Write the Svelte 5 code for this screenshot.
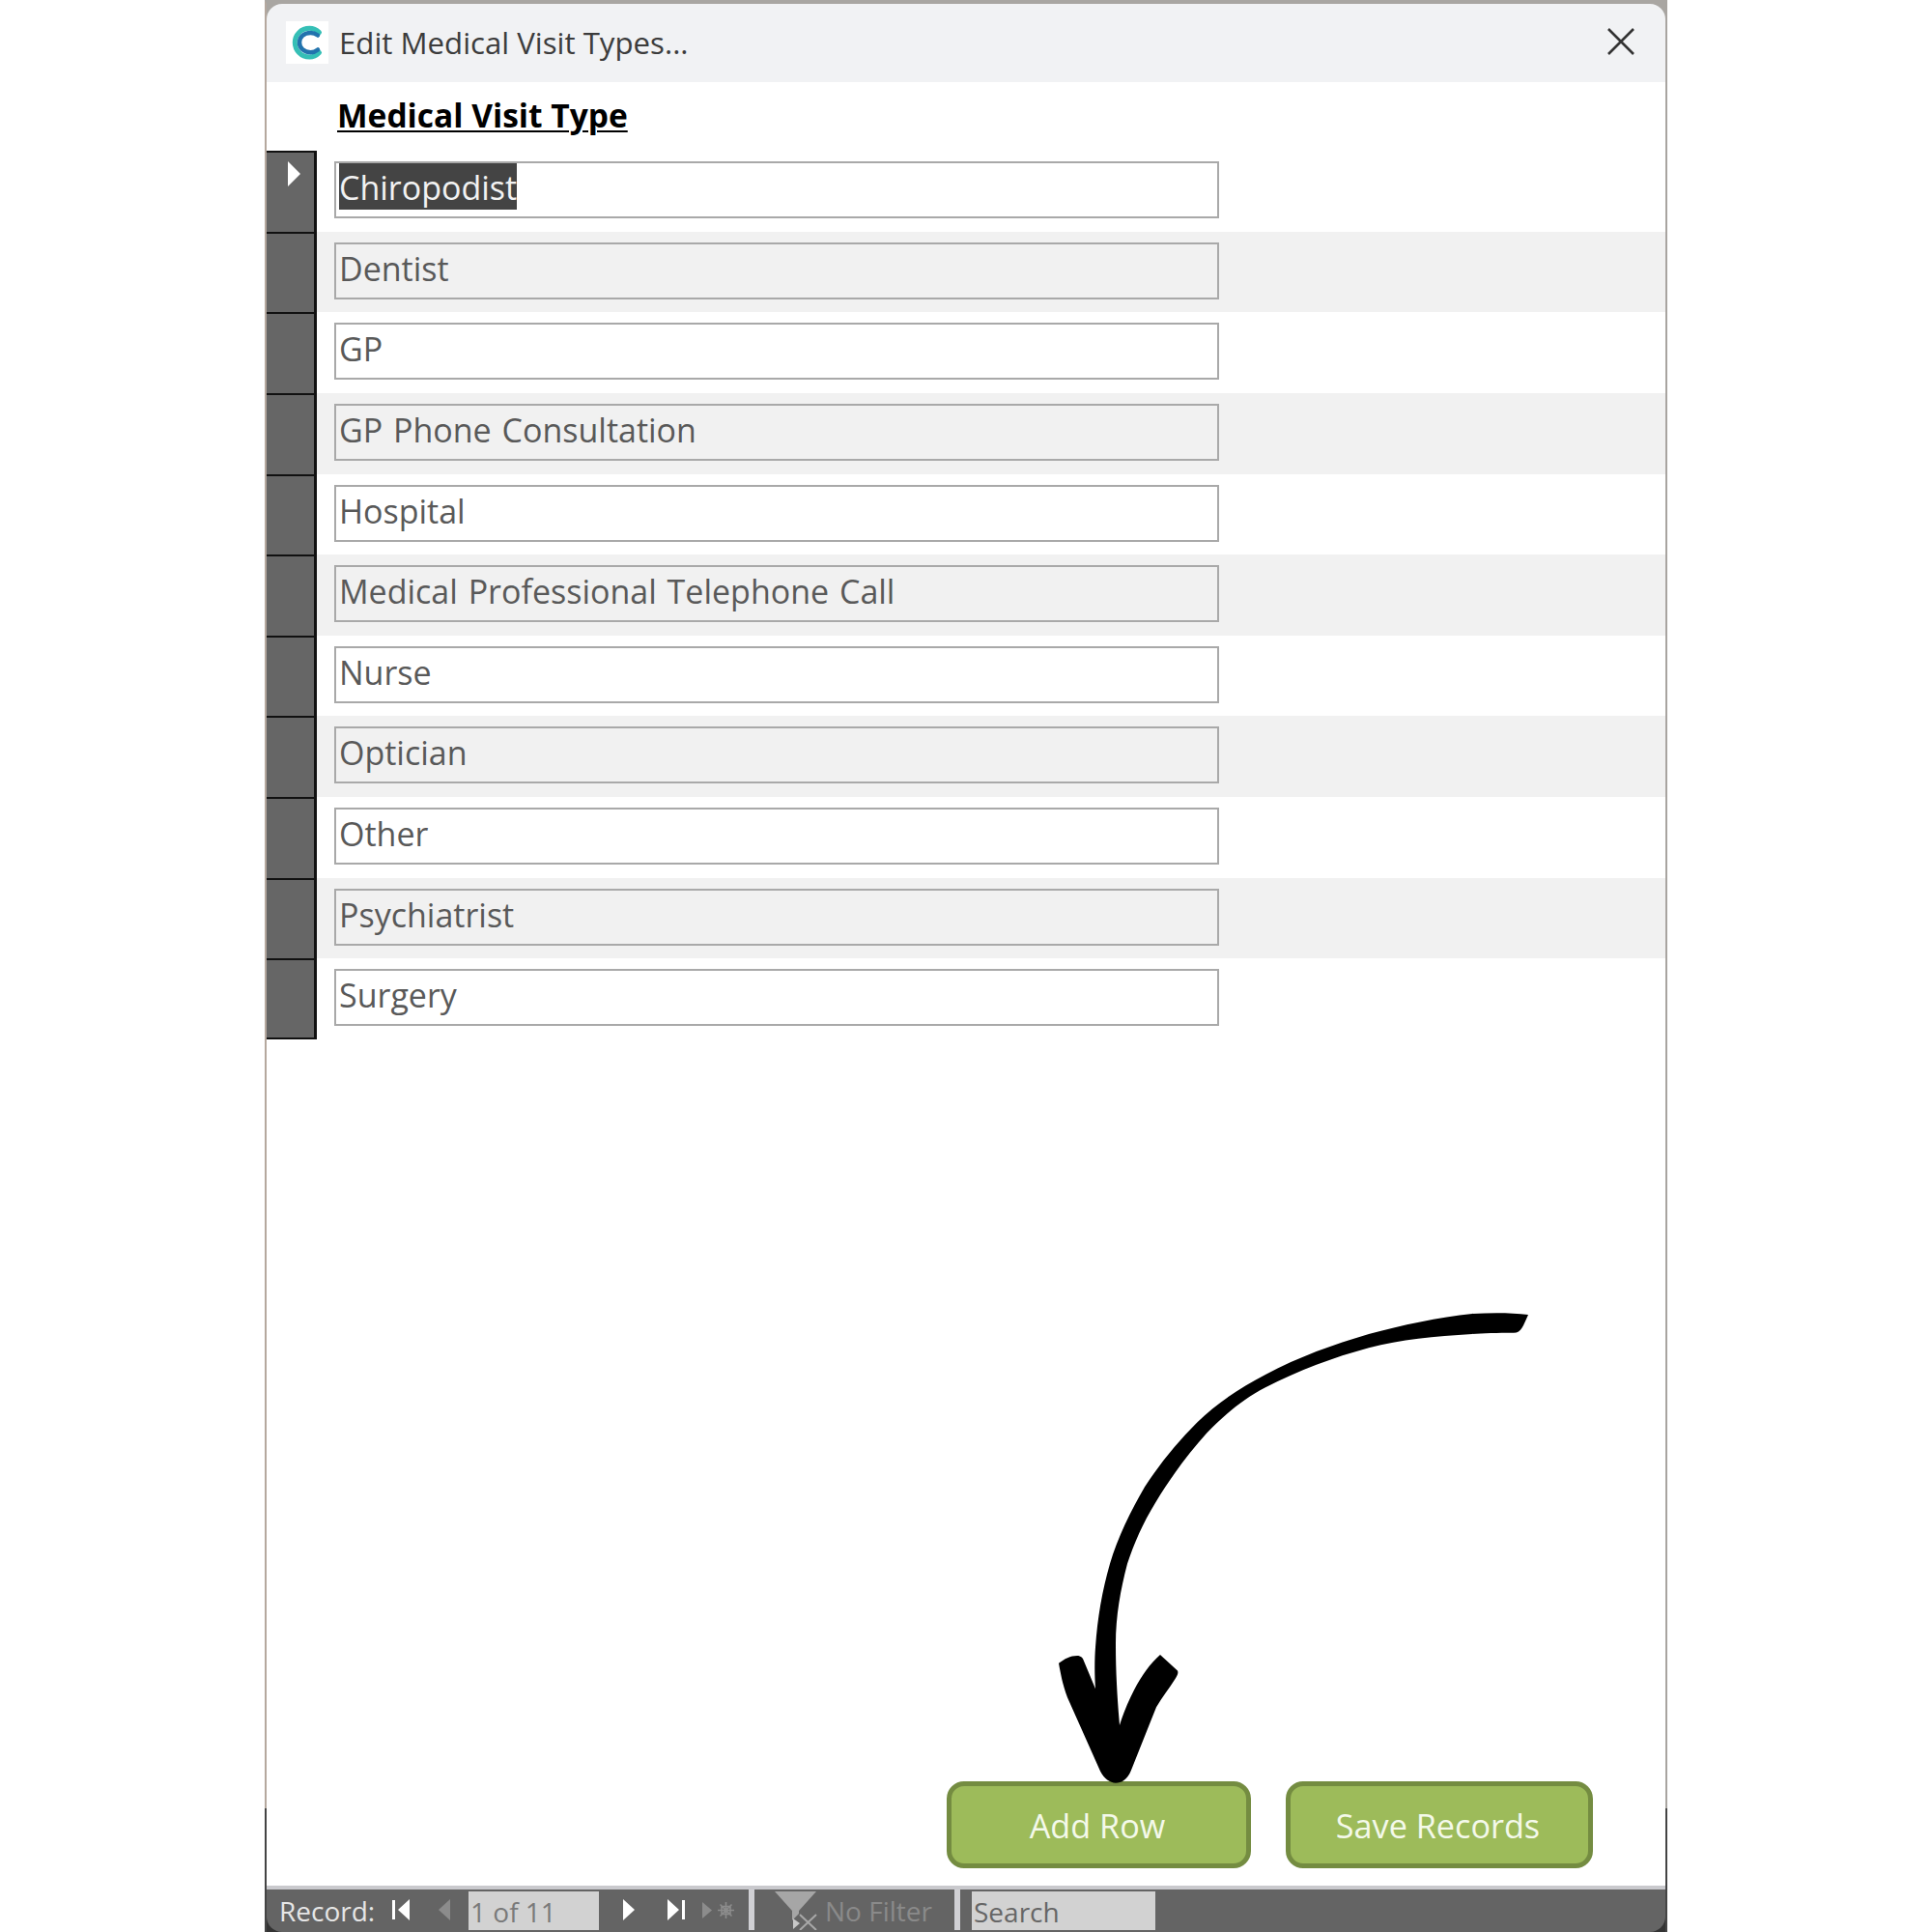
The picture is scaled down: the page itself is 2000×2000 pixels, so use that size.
<script>
  const types = ['Chiropodist','Dentist','GP','GP Phone Consultation','Hospital','Medical Professional Telephone Call','Nurse','Optician','Other','Psychiatrist','Surgery'];
</script>

<div class="page">
  <div class="window">
    <header class="titlebar">
      <div class="logo">
        <svg viewBox="0 0 44 44" width="44" height="44" aria-hidden="true">
          <path d="M34.500 11.500 C31 8.200 28 7.300 24.500 7.300 C15.500 7.300 9.300 14 9.300 22 C9.300 30 15.500 37 24.500 37 C28 37 31 36 34.500 32.500" class="arc-outer" />
          <path d="M33 14.500 C30.500 12.700 28 12 25.500 12 C18.500 12 14 16.500 14 22 C14 27.500 18.500 32.300 25.500 32.300 C28 32.300 30.500 31.500 33 29.500" class="arc-inner" />
        </svg>
      </div>
      <span class="title">Edit Medical Visit Types...</span>
      <svg class="close" viewBox="0 0 30 30" width="30" height="30" aria-hidden="true">
        <path d="M2 2 L28 28 M28 2 L2 28" />
      </svg>
    </header>

    <div class="column-head"><span>Medical Visit Type</span></div>

    <div class="rows">
      {#each types as t, i}
        <div class="row" class:alt={i % 2 === 1}>
          <div class="selector">
            {#if i === 0}<span class="current"></span>{/if}
          </div>
          <div class="field">
            <span class:selected={i === 0}>{t}</span>
          </div>
        </div>
      {/each}
    </div>

    <div class="actions">
      <button class="btn add">Add Row</button>
      <button class="btn save">Save Records</button>
    </div>

    <footer class="status">
      <span class="label">Record:</span>
      <svg class="nav first" viewBox="0 0 20 22" width="20" height="22" aria-hidden="true"><path d="M1 1h3v20H1z M19 0v22L7 11z" /></svg>
      <svg class="nav prev" viewBox="0 0 12 22" width="12" height="22" aria-hidden="true"><path d="M12 0v22L0 11z" /></svg>
      <div class="box counter">1 of 11</div>
      <svg class="nav next" viewBox="0 0 12 22" width="12" height="22" aria-hidden="true"><path d="M0 0v22L12 11z" /></svg>
      <svg class="nav last" viewBox="0 0 18 22" width="18" height="22" aria-hidden="true"><path d="M0 0v22L12 11z M15 1h3v20h-3z" /></svg>
      <svg class="nav new" viewBox="0 0 33 22" width="33" height="22" aria-hidden="true">
        <path d="M0 3v17L10 11.500z" />
        <path class="star" d="M24.500 3v17 M16 11.500h17 M18.500 5.500l12 12 M30.500 5.500l-12 12 M20 7.500h9v8h-9z" />
      </svg>
      <div class="sep first-sep"></div>
      <svg class="funnel" viewBox="0 0 44 40" width="44" height="40" aria-hidden="true">
        <path d="M0 0h43L25 20v3l-7 7V20z" />
        <path class="tri" d="M19 28l7 5-7 6z" />
        <path class="x" d="M26 24l17 16 M43 24L26 40" />
      </svg>
      <span class="nofilter">No Filter</span>
      <div class="sep second-sep"></div>
      <div class="box search">Search</div>
    </footer>
  </div>

  <svg class="arrow" viewBox="1090 1350 500 500" width="500" height="500" aria-hidden="true">
    <path transform="translate(0 1330) scale(1 1.1067) translate(0 -1330)" d="M1582 1358 C1577 1368 1575 1375 1567 1375 C1550 1375 1535 1375.500 1524 1376 C1485 1378 1450 1381 1417 1389 C1380 1398 1345 1410 1310 1426 C1285 1438 1267 1452 1249 1469 C1230 1488 1212 1510 1196 1534 C1183 1553 1174 1572 1167 1591 C1160 1615 1155 1640 1155 1666 C1155 1695 1157 1720 1159 1742 C1163 1730 1168 1720 1174 1709 C1182 1695 1191 1684 1201 1676 L1219 1691 C1220 1693 1219 1695 1217 1698 C1210 1708 1203 1716 1197 1725 L1171 1784 C1167 1793 1161 1796 1155 1796 C1149 1796 1143 1792 1139 1785 L1105 1716 C1100 1704 1098 1694 1096 1684 C1102 1680 1108 1677 1115 1677 C1119 1677 1121 1679 1122 1682 L1134 1708 C1133 1695 1133 1680 1134 1669 C1136 1642 1141 1616 1149 1591 C1157 1566 1171 1541 1185 1519 C1201 1497 1219 1477 1239 1459 C1260 1440 1285 1426 1310 1414 C1345 1397 1380 1386 1417 1376 C1450 1368 1490 1360 1524 1357 C1545 1356 1565 1356 1582 1358 Z" />
  </svg>
</div>

<style>
  :global(body) { margin: 0; background: #fff; }
  .page {
    position: relative;
    width: 2000px;
    height: 2000px;
    background: #fff;
    font-family: "Open Sans", "Noto Sans", sans-serif;
  }
  .page::before,
  .page::after {
    content: "";
    position: absolute;
    top: 1872px;
    bottom: 0;
    width: 2px;
    background: #444;
  }
  .page::before { left: 274px; }
  .page::after { left: 1724px; }
  .window {
    margin-left: 274px;
    width: 1452px;
    height: 2000px;
    box-sizing: border-box;
    display: flex;
    flex-direction: column;
    background: linear-gradient(#a9a6a2 0 40px, #fff 40px calc(100% - 40px), #333 calc(100% - 40px));
    border-top: 4px solid #a9a6a2;
    border-left: 2px solid #b5a89e;
    border-right: 2px solid #a8a4a0;
  }
  .titlebar {
    height: 81px;
    flex: none;
    display: flex;
    align-items: center;
    background: #f1f2f4;
    border-radius: 16px 16px 0 0;
    padding-left: 20px;
    padding-right: 31px;
  }
  .logo {
    width: 44px;
    height: 44px;
    background: #fff;
    margin-top: -2px;
  }
  .logo svg { display: block; }
  .arc-outer { fill: none; stroke: #35bfb6; stroke-width: 5; stroke-linecap: round; }
  .arc-inner { fill: none; stroke: #2273ad; stroke-width: 4.5; stroke-linecap: round; }
  .title {
    margin-left: 11px;
    font-size: 31.2px;
    color: #3c3c3c;
    line-height: 1;
  }
  .close { margin-left: auto; margin-top: -4px; }
  .close path { fill: none; stroke: #333; stroke-width: 2.6; }
  .column-head {
    height: 71px;
    flex: none;
    box-sizing: border-box;
    padding-left: 73px;
    padding-top: 12px;
    background: #fff;
    font-size: 33.5px;
    line-height: 44px;
    font-weight: 700;
    color: #000;
  }
  .column-head span { text-decoration: underline; text-decoration-thickness: 2px; text-underline-offset: 3px; }
  .rows { flex: none; }
  .row {
    height: 83.64px;
    box-sizing: border-box;
    display: flex;
    background: #fff;
  }
  .row.alt { background: #f1f1f1; }
  .selector {
    flex: none;
    width: 52px;
    box-sizing: border-box;
    background: #666;
    border-right: 3px solid #111;
    border-top: 2px solid #111;
    position: relative;
  }
  .row:last-child .selector { border-bottom: 2px solid #111; }
  .current {
    position: absolute;
    left: 22px;
    top: 9px;
    width: 0;
    height: 0;
    border-left: 13px solid #fff;
    border-top: 13px solid transparent;
    border-bottom: 13px solid transparent;
  }
  .field {
    margin-left: 18px;
    margin-top: 11px;
    width: 916px;
    height: 59px;
    box-sizing: border-box;
    border: 2px solid #a9a9a9;
    padding-left: 3px;
    font-size: 34px;
    word-spacing: 2px;
    line-height: 50px;
    color: #595959;
    white-space: nowrap;
  }
  .field span { display: inline-block; height: 48px; }
  .selected { background: #444; color: #f2f2f2; }
  .actions {
    flex: 1;
    display: flex;
    align-items: flex-end;
    justify-content: flex-end;
    gap: 36px;
    padding-right: 75px;
    padding-bottom: 18px;
    background: #fff;
  }
  .btn {
    height: 90px;
    box-sizing: border-box;
    border: 5px solid #748c41;
    border-radius: 18px;
    background: #9dbb5a;
    color: #f4f9ea;
    font-family: "Open Sans", sans-serif;
    font-size: 34.2px;
    padding: 0 3px 0 0;
  }
  .add { width: 315px; }
  .save { width: 318px; }
  .status {
    height: 48px;
    flex: none;
    box-sizing: border-box;
    display: flex;
    align-items: flex-start;
    position: relative;
    background: #646464;
    border-top: 4px solid #c9c9cd;
    border-radius: 0 0 16px 16px;
    color: #e6e6e6;
    font-size: 28px;
  }
  .label { margin-left: 13px; line-height: 44px; width: 116px; }
  .nav { margin-top: 10px; fill: #fff; flex: none; }
  .prev, .new { fill: #8c8c8c; }
  .prev { margin-left: 29px; }
  .box { background: #d2d2d2; height: 40px; line-height: 42px; color: #7a7a7a; box-sizing: border-box; padding-left: 2px; margin-top: 2px; flex: none; }
  .counter { width: 135px; margin-left: 19px; }
  .next { margin-left: 25px; }
  .last { margin-left: 34px; }
  .new { margin-left: 18px; }
  .star { fill: none; stroke: #8c8c8c; stroke-width: 1.6; }
  .sep { width: 6px; height: 42px; background: #d0d0d4; flex: none; }
  .first-sep { margin-left: 15px; }
  .funnel { margin-left: 21px; margin-top: 2px; fill: #a6a6a6; flex: none; }
  .funnel .tri { fill: #c8c8c8; }
  .funnel .x { fill: none; stroke: #a8a8a8; stroke-width: 2; }
  .nofilter { margin-left: 8px; line-height: 44px; color: #8a8a8a; width: 134px; flex: none; }
  .search { width: 190px; margin-left: 12px; color: #666; }
  .arrow {
    position: absolute;
    left: 1090px;
    top: 1350px;
    fill: #000;
  }
</style>
